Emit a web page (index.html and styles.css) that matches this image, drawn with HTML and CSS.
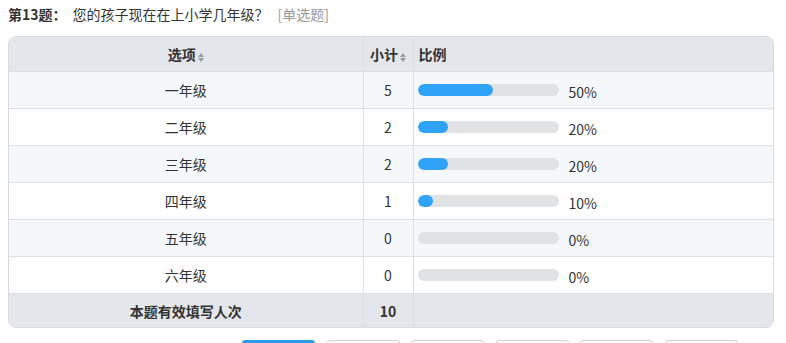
FILE: index.html
```html
<!DOCTYPE html>
<html lang="zh">
<head>
<meta charset="utf-8">
<link rel="stylesheet" href="styles.css">
</head>
<body>
<div class="q-title">
  <span class="q-num">第13题：</span>
  <span class="q-text">您的孩子现在在上小学几年级？</span>
  <span class="q-type">[单选题]</span>
</div>
<div class="tbl-wrap">
  <table class="tbl">
    <colgroup><col class="c1"><col class="c2"><col class="c3"></colgroup>
    <thead>
      <tr>
        <th class="center">选项<span class="sort"><i class="up"></i><i class="down"></i></span></th>
        <th class="center tight">小计<span class="sort"><i class="up"></i><i class="down"></i></span></th>
        <th class="left">比例</th>
      </tr>
    </thead>
    <tbody>
      <tr class="alt"><td class="center">一年级</td><td class="center">5</td><td><div class="ratio"><div class="track"><div class="fill" style="width:75px"></div></div><span class="pct">50%</span></div></td></tr>
      <tr><td class="center">二年级</td><td class="center">2</td><td><div class="ratio"><div class="track"><div class="fill" style="width:30px"></div></div><span class="pct">20%</span></div></td></tr>
      <tr class="alt"><td class="center">三年级</td><td class="center">2</td><td><div class="ratio"><div class="track"><div class="fill" style="width:30px"></div></div><span class="pct">20%</span></div></td></tr>
      <tr><td class="center">四年级</td><td class="center">1</td><td><div class="ratio"><div class="track"><div class="fill" style="width:15px"></div></div><span class="pct">10%</span></div></td></tr>
      <tr class="alt"><td class="center">五年级</td><td class="center">0</td><td><div class="ratio"><div class="track"><div class="fill" style="width:0px"></div></div><span class="pct">0%</span></div></td></tr>
      <tr><td class="center">六年级</td><td class="center">0</td><td><div class="ratio"><div class="track"><div class="fill" style="width:0px"></div></div><span class="pct">0%</span></div></td></tr>
    </tbody>
    <tfoot>
      <tr><td class="center">本题有效填写人次</td><td class="center total">10</td><td></td></tr>
    </tfoot>
  </table>
</div>
<div class="btns">
  <span class="btn active"></span>
  <span class="btn"></span>
  <span class="btn"></span>
  <span class="btn"></span>
  <span class="btn"></span>
  <span class="btn"></span>
</div>
</body>
</html>
```
FILE: styles.css
```css
html, body {
  margin: 0;
  padding: 0;
  background: #fff;
  overflow: hidden;
}
body {
  padding: 3px 8px 0 8px;
  font-family: "Noto Sans CJK SC", "Noto Sans", sans-serif;
  font-size: 14px;
  color: #333;
}
.q-title {
  height: 22px;
  line-height: 22px;
  font-size: 14px;
  display: flex;
  align-items: center;
  overflow: hidden;
}
.q-num {
  font-weight: bold;
  color: #333;
  margin-right: 6px;
}
.q-text {
  color: #333;
  margin-right: 9px;
}
.q-type {
  color: #999;
}
.tbl-wrap {
  margin-top: 11px;
  width: 764px;
  border: 1px solid #d7dadf;
  border-radius: 8px;
  overflow: hidden;
}
.tbl {
  width: 100%;
  border-collapse: collapse;
  table-layout: fixed;
  font-size: 14px;
}
.c1 { width: 354px; }
.c2 { width: 50px; }
.tbl th, .tbl td {
  padding: 0;
  border-left: 1px solid #dcdfe4;
  border-top: 1px solid #dcdfe4;
  vertical-align: middle;
  line-height: 18px;
}
.tbl th:first-child, .tbl td:first-child { border-left: none; }
.tbl thead th {
  border-top: none;
  height: 34px;
  background: #e3e6ea;
  font-weight: bold;
  color: #333;
}
.tbl tbody td {
  height: 36px;
  background: #fff;
}
.tbl tbody tr.alt td { background: #f5f8fb; }
.tbl tfoot td {
  height: 33px;
  background: #e3e6ea;
  font-weight: bold;
}
.center { text-align: center; }
.left { text-align: left; padding-left: 5px !important; }
.tight { white-space: nowrap; }
.sort {
  display: inline-flex;
  flex-direction: column;
  gap: 1px;
  margin-left: 2px;
  vertical-align: 3px;
}
.sort i {
  display: block;
  width: 0;
  height: 0;
  border-left: 3px solid transparent;
  border-right: 3px solid transparent;
}
.sort .up { border-bottom: 4px solid #999; }
.sort .down { border-top: 4px solid #999; }
.ratio {
  display: flex;
  align-items: center;
  padding-left: 4px;
}
.track {
  width: 141px;
  height: 12px;
  border-radius: 6px;
  background: #e1e2e4;
  overflow: hidden;
}
.fill {
  height: 12px;
  border-radius: 6px;
  background: #2ea3f8;
}
.pct {
  margin-left: 10px;
  font-size: 14px;
  line-height: 14px;
  padding-top: 4px;
  color: #333;
}
.total { font-size: 14px; }
.btns {
  display: flex;
  gap: 11.6px;
  margin-top: 12px;
  padding-left: 234px;
}
.btn {
  display: block;
  flex: none;
  width: 71px;
  height: 28px;
  border: 1px solid #cfd1d4;
  border-radius: 3px;
  background: #fff;
}
.btn.active {
  border-color: #2a9bf0;
  background: #2a9bf0;
}
```
